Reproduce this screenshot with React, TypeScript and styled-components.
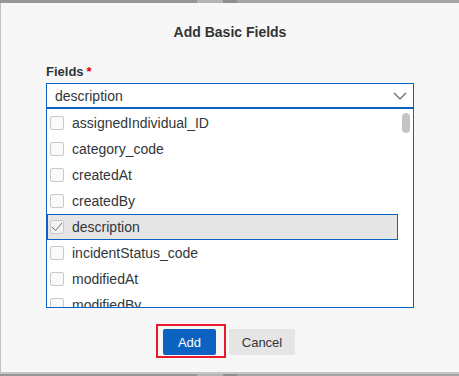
import React from "react";
import styled, { createGlobalStyle } from "styled-components";

const GlobalStyle = createGlobalStyle`
  html, body {
    margin: 0;
    padding: 0;
    background: #a3a3a3;
    font-family: "Liberation Sans", Arial, sans-serif;
  }
`;

const Backdrop = styled.div`
  width: 459px;
  height: 376px;
  padding-top: 3px;
  box-sizing: border-box;
  background: linear-gradient(
    to right,
    #979797 0px,
    #979797 197px,
    #b4b4b4 197px,
    #b4b4b4 223px,
    #8f8f8f 223px,
    #8f8f8f 237px,
    #a6a6a6 237px
  );
`;

const Dialog = styled.div`
  height: 371px;
  box-sizing: border-box;
  background: #f7f7f7;
  border-left: 1px solid #c2c2c2;
  border-bottom: 2px solid #c6c6c6;
  padding: 21px 45px 0 45px;
  display: flex;
  flex-direction: column;
`;

const Title = styled.h1`
  margin: 0;
  font-size: 14px;
  line-height: 16px;
  font-weight: 700;
  color: #333333;
  text-align: center;
`;

const Label = styled.div`
  margin-top: 24px;
  font-size: 13px;
  line-height: 16px;
  font-weight: 700;
  color: #32363a;
`;

const Required = styled.span`
  color: #e00000;
  margin-left: 3px;
`;

const Select = styled.div`
  margin-top: 3px;
  height: 26px;
  box-sizing: border-box;
  background: #ffffff;
  border: 1px solid #0b62c0;
  border-bottom-width: 2px;
  display: flex;
  align-items: center;
  justify-content: space-between;
  padding: 0 6px 0 8px;
  font-size: 14px;
  color: #32363a;
`;

const ListBox = styled.div`
  height: 199px;
  box-sizing: border-box;
  background: #ffffff;
  border: 1px solid #0b62c0;
  border-top: none;
  display: flex;
  overflow: hidden;
`;

const Rows = styled.div`
  flex: 1;
  padding-top: 1px;
  display: flex;
  flex-direction: column;
`;

const Row = styled.div<{ $selected?: boolean }>`
  flex: 0 0 26px;
  display: flex;
  align-items: center;
  gap: 8px;
  padding-left: 3px;
  background: ${({ $selected }) => ($selected ? "#e5e5e5" : "transparent")};
  box-shadow: ${({ $selected }) =>
    $selected ? "inset 0 0 0 1px #0b62c0" : "none"};
  font-size: 14px;
  color: #32363a;
`;

const Check = styled.span<{ $checked?: boolean }>`
  width: 14px;
  height: 14px;
  box-sizing: border-box;
  border: 1px solid #c9c9c9;
  border-radius: 2px;
  background: ${({ $checked }) => ($checked ? "#f2f2f2" : "#fafafa")};
  display: flex;
  align-items: center;
  justify-content: center;
`;

const ScrollTrack = styled.div`
  width: 15px;
  padding: 4px 3px 0 4px;
  box-sizing: border-box;
`;

const Thumb = styled.div`
  width: 8px;
  height: 20px;
  border-radius: 4px;
  background: #c4c4c4;
`;

const Footer = styled.div`
  margin-top: 16px;
  padding-right: 9px;
  display: flex;
  justify-content: center;
  align-items: flex-start;
  gap: 3px;
`;

const Highlight = styled.span`
  display: inline-flex;
  border: 2px solid #e8192c;
  padding: 3px 8px 1px 5px;
`;

const Button = styled.button<{ $primary?: boolean }>`
  height: 26px;
  min-width: ${({ $primary }) => ($primary ? "53px" : "66px")};
  border: none;
  border-radius: 2px;
  padding: 0 10px;
  font-family: "Liberation Sans", Arial, sans-serif;
  font-size: 13px;
  background: ${({ $primary }) => ($primary ? "#0b62c0" : "#e5e5e5")};
  color: ${({ $primary }) => ($primary ? "#ffffff" : "#32363a")};
  cursor: pointer;
`;

const CancelButton = styled(Button)`
  margin-top: 5px;
`;

const fields = [
  "assignedIndividual_ID",
  "category_code",
  "createdAt",
  "createdBy",
  "description",
  "incidentStatus_code",
  "modifiedAt",
  "modifiedBy",
];

function Chevron() {
  return (
    <svg width="14" height="8" viewBox="0 0 14 8">
      <path d="M1 1 L7 7 L13 1" fill="none" stroke="#5b5f63" strokeWidth="1.1" />
    </svg>
  );
}

function CheckMark() {
  return (
    <svg width="12" height="10" viewBox="0 0 12 10">
      <path d="M1 5 L4.5 8.5 L11 1" fill="none" stroke="#6a6d70" strokeWidth="1" />
    </svg>
  );
}

export default function App() {
  const selected = "description";
  return (
    <>
      <GlobalStyle />
      <Backdrop>
        <Dialog>
          <Title>Add Basic Fields</Title>
          <Label>
            Fields<Required>*</Required>
          </Label>
          <Select>
            {selected}
            <Chevron />
          </Select>
          <ListBox>
            <Rows>
              {fields.map((f) => (
                <Row key={f} $selected={f === selected}>
                  <Check $checked={f === selected}>
                    {f === selected && <CheckMark />}
                  </Check>
                  {f}
                </Row>
              ))}
            </Rows>
            <ScrollTrack>
              <Thumb />
            </ScrollTrack>
          </ListBox>
          <Footer>
            <Highlight>
              <Button $primary>Add</Button>
            </Highlight>
            <CancelButton>Cancel</CancelButton>
          </Footer>
        </Dialog>
      </Backdrop>
    </>
  );
}
